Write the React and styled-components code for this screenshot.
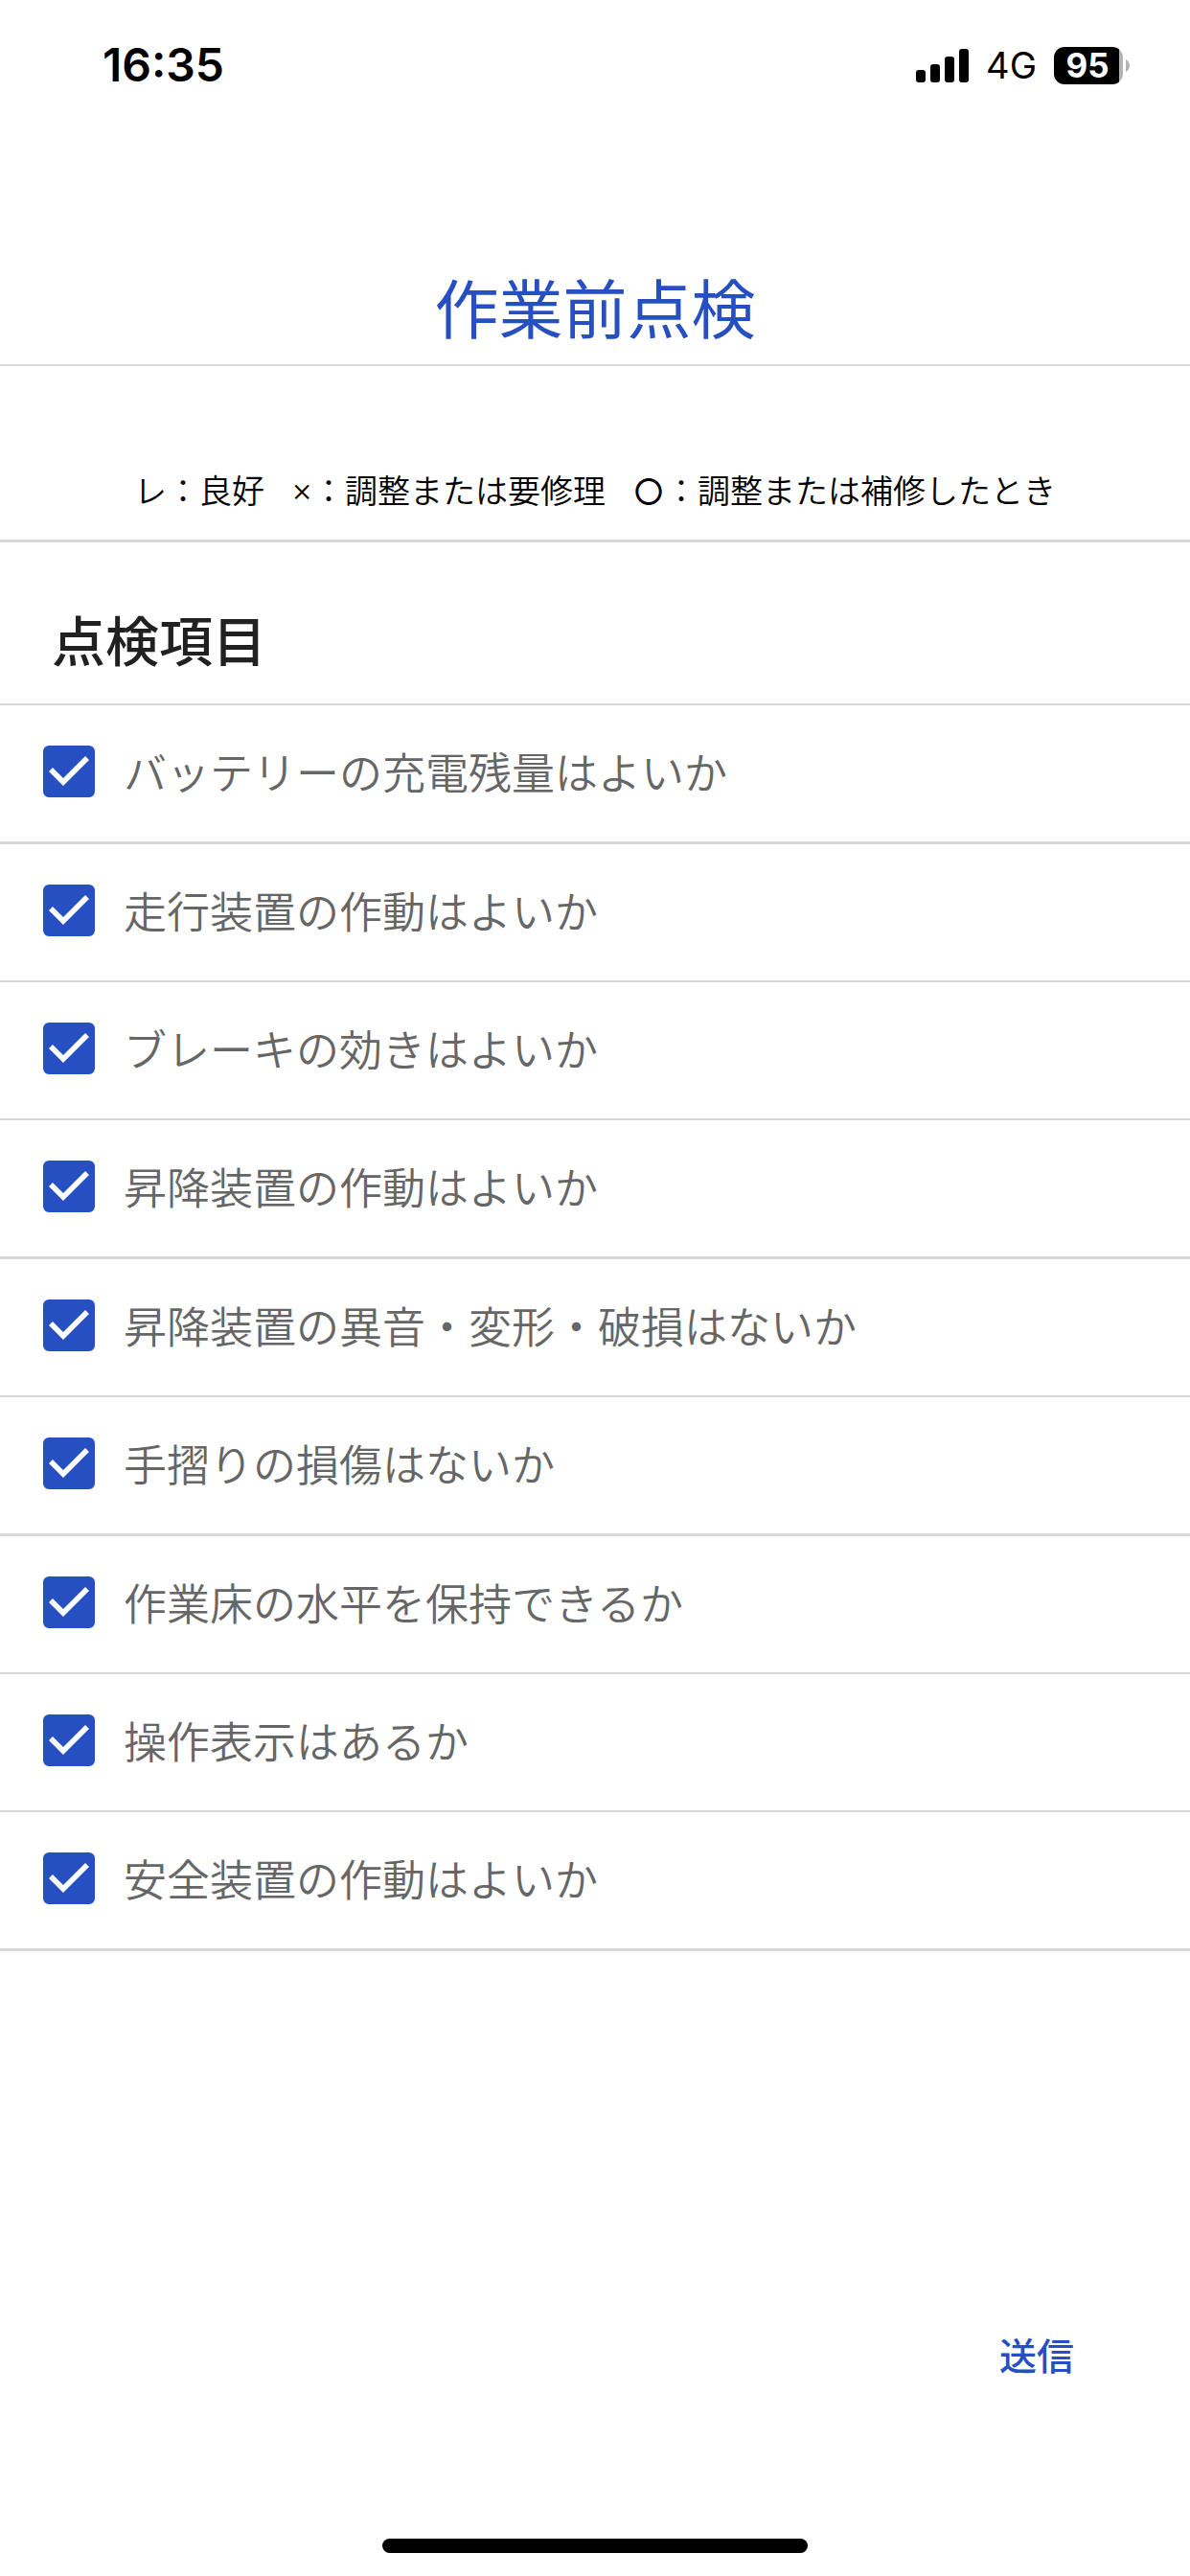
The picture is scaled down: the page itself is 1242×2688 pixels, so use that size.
import React, { useState } from 'react';
import styled, { createGlobalStyle, ThemeProvider } from 'styled-components';

const theme = {
    colors: {
        primary: '#264fc2',
        heading: '#212121',
        label: '#666666',
        divider: '#d8d8d8'
    },
    fonts: {
        status: 'Inter, "Liberation Sans", sans-serif',
        body: '"Noto Sans CJK JP", sans-serif'
    }
};

const legend = [
    { mark: 'レ', text: '良好' },
    { mark: '×', text: '調整または要修理', variant: 'cross' },
    { mark: '〇', text: '調整または補修したとき', variant: 'circle' }
];

const items = [
    'バッテリーの充電残量はよいか',
    '走行装置の作動はよいか',
    'ブレーキの効きはよいか',
    '昇降装置の作動はよいか',
    '昇降装置の異音・変形・破損はないか',
    '手摺りの損傷はないか',
    '作業床の水平を保持できるか',
    '操作表示はあるか',
    '安全装置の作動はよいか'
];

const GlobalStyle = createGlobalStyle`
    * {
        box-sizing: border-box;
    }

    body {
        margin: 0;
        background: #fff;
        font-family: ${({ theme }) => theme.fonts.body};
    }
`;

const Screen = styled.div`
    display: flex;
    flex-direction: column;
    min-height: 100vh;
`;

const StatusBar = styled.div`
    display: flex;
    align-items: center;
    justify-content: space-between;
    height: 136px;
    padding: 0 63px 0 107px;
    font-family: ${({ theme }) => theme.fonts.status};
    color: #000;
`;

const Clock = styled.time`
    font-size: 48px;
    font-weight: 600;
    line-height: 56px;
`;

const StatusIcons = styled.div`
    display: flex;
    align-items: center;
    gap: 18px;
`;

const Network = styled.span`
    font-size: 38px;
    line-height: 48px;
`;

const Battery = styled.div`
    display: flex;
    align-items: center;
    gap: 3px;
`;

const BatteryLevel = styled.span`
    width: 72px;
    height: 39px;
    padding-right: 2px;
    border-radius: 11px;
    background: linear-gradient(to right, #000 95%, #b3b3b3 95%);
    color: #fff;
    font-size: 35px;
    font-weight: 700;
    line-height: 39px;
    text-align: center;
`;

const TitleBar = styled.header`
    display: flex;
    align-items: flex-end;
    justify-content: center;
    height: 246px;
    padding-bottom: 13px;
    border-bottom: 2px solid ${({ theme }) => theme.colors.divider};
`;

const Title = styled.h1`
    margin: 0;
    color: ${({ theme }) => theme.colors.primary};
    font-size: 67px;
    font-weight: 400;
    line-height: 96px;
`;

const Legend = styled.div`
    display: flex;
    align-items: flex-end;
    justify-content: center;
    gap: 28px;
    height: 184px;
    padding-bottom: 28px;
    border-bottom: 3px solid ${({ theme }) => theme.colors.divider};
    color: #000;
    font-size: 34px;
    font-weight: 350;
    line-height: 48px;
`;

const LegendEntry = styled.span`
    display: flex;
`;

const Mark = styled.span`
    display: flex;
    justify-content: center;
    width: ${({ $variant }) => ($variant === 'cross' ? '22px' : '34px')};
    font-family: ${({ $variant, theme }) => ($variant === 'cross' ? theme.fonts.status : 'inherit')};
    font-size: ${({ $variant }) => ($variant === 'circle' ? '30px' : '34px')};
    font-weight: ${({ $variant }) => ($variant === 'circle' ? 500 : 'inherit')};
`;

const SectionTitle = styled.h2`
    margin: 0;
    padding: 61px 54px 29px;
    border-bottom: 2px solid ${({ theme }) => theme.colors.divider};
    color: ${({ theme }) => theme.colors.heading};
    font-size: 56px;
    font-weight: 500;
    line-height: 78px;
`;

const CheckList = styled.ul`
    margin: 0;
    padding: 0;
    list-style: none;
`;

const CheckRow = styled.li`
    border-bottom: 2px solid ${({ theme }) => theme.colors.divider};

    &:nth-child(5n + 1),
    &:nth-child(5n + 4) {
        border-bottom-width: 3px;
    }
`;

const CheckLabel = styled.label`
    display: flex;
    align-items: center;
    gap: 30px;
    height: 142px;
    padding: 0 45px 4px;
    color: ${({ theme }) => theme.colors.label};
    font-size: 45px;
    font-weight: 350;
    line-height: 64px;
    cursor: pointer;
`;

const CheckBox = styled.span`
    display: grid;
    flex: none;
    width: 54px;
    height: 54px;

    > * {
        grid-area: 1 / 1;
    }

    svg {
        pointer-events: none;
    }
`;

const CheckInput = styled.input`
    appearance: none;
    width: 54px;
    height: 54px;
    margin: 0;
    border: 6px solid ${({ theme }) => theme.colors.label};
    border-radius: 6px;
    cursor: pointer;

    &:checked {
        border-color: ${({ theme }) => theme.colors.primary};
        background: ${({ theme }) => theme.colors.primary};
    }
`;

const Actions = styled.div`
    display: flex;
    justify-content: flex-end;
    padding: 380px 97px 0;
`;

const SubmitButton = styled.button`
    padding: 12px 24px;
    border: 0;
    background: none;
    color: ${({ theme }) => theme.colors.primary};
    font-family: inherit;
    font-size: 39px;
    font-weight: 500;
    line-height: 56px;
    cursor: pointer;
`;

const HomeIndicator = styled.div`
    align-self: center;
    width: 444px;
    height: 15px;
    margin-top: auto;
    margin-bottom: 24px;
    border-radius: 8px;
    background: #000;
`;

const SignalIcon = () => (
    <svg width="55" height="35" viewBox="0 0 55 35" aria-hidden="true">
        <rect x="0" y="22" width="10" height="13" rx="3" />
        <rect x="15" y="16" width="10" height="19" rx="3" />
        <rect x="30" y="8" width="10" height="27" rx="3" />
        <rect x="45" y="0" width="10" height="35" rx="3" />
    </svg>
);

const BatteryTip = () => (
    <svg width="4" height="13" viewBox="0 0 4 13" aria-hidden="true">
        <path d="M0 0C2.5 1.5 4 4 4 6.5S2.5 11.5 0 13Z" fill="#b3b3b3" />
    </svg>
);

const CheckItem = ({ text }) => {
    const [checked, setChecked] = useState(true);

    return (
        <CheckRow>
            <CheckLabel>
                <CheckBox>
                    <CheckInput
                        type="checkbox"
                        checked={checked}
                        onChange={(evt) => setChecked(evt.target.checked)}
                    />
                    {checked && (
                        <svg width="54" height="54" viewBox="0 0 54 54" aria-hidden="true">
                            <path d="M8 25L21 38L46 13" fill="none" stroke="#fff" strokeWidth="5.6" />
                        </svg>
                    )}
                </CheckBox>
                {text}
            </CheckLabel>
        </CheckRow>
    );
};

const App = () => (
    <ThemeProvider theme={theme}>
        <GlobalStyle />
        <Screen lang="ja">
            <StatusBar>
                <Clock>16:35</Clock>
                <StatusIcons>
                    <SignalIcon />
                    <Network>4G</Network>
                    <Battery>
                        <BatteryLevel>95</BatteryLevel>
                        <BatteryTip />
                    </Battery>
                </StatusIcons>
            </StatusBar>
            <TitleBar>
                <Title>作業前点検</Title>
            </TitleBar>
            <main>
                <Legend>
                    {legend.map(({ mark, text, variant }) => (
                        <LegendEntry key={mark}>
                            <Mark $variant={variant}>{mark}</Mark>
                            ：{text}
                        </LegendEntry>
                    ))}
                </Legend>
                <SectionTitle>点検項目</SectionTitle>
                <CheckList>
                    {items.map((text) => (
                        <CheckItem key={text} text={text} />
                    ))}
                </CheckList>
                <Actions>
                    <SubmitButton type="button">送信</SubmitButton>
                </Actions>
            </main>
            <HomeIndicator />
        </Screen>
    </ThemeProvider>
);

export default App;
